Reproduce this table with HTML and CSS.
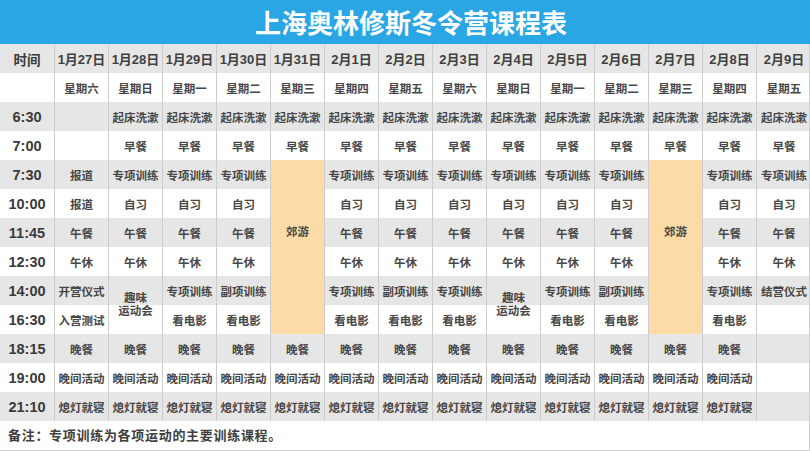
FILE: index.html
```html
<!DOCTYPE html>
<html lang="zh-CN">
<head>
<meta charset="utf-8">
<title>上海奥林修斯冬令营课程表</title>
<link rel="stylesheet" href="styles.css">
</head>
<body>
<div class="page">
  <div class="title">上海奥林修斯冬令营课程表</div>
  <div class="box">
    <div class="grid">
      <!-- dates -->
      <div class="c t hd">时间</div>
      <div class="c d">1月27日</div><div class="c d">1月28日</div><div class="c d">1月29日</div><div class="c d">1月30日</div><div class="c d">1月31日</div><div class="c d">2月1日</div><div class="c d">2月2日</div><div class="c d">2月3日</div><div class="c d">2月4日</div><div class="c d">2月5日</div><div class="c d">2月6日</div><div class="c d">2月7日</div><div class="c d">2月8日</div><div class="c d">2月9日</div>
      <!-- weekdays -->
      <div class="c t"></div>
      <div class="c w">星期六</div><div class="c w">星期日</div><div class="c w">星期一</div><div class="c w">星期二</div><div class="c w">星期三</div><div class="c w">星期四</div><div class="c w">星期五</div><div class="c w">星期六</div><div class="c w">星期日</div><div class="c w">星期一</div><div class="c w">星期二</div><div class="c w">星期三</div><div class="c w">星期四</div><div class="c w">星期五</div>
      <!-- 6:30 -->
      <div class="c t">6:30</div>
      <div class="c"></div><div class="c">起床洗漱</div><div class="c">起床洗漱</div><div class="c">起床洗漱</div><div class="c">起床洗漱</div><div class="c">起床洗漱</div><div class="c">起床洗漱</div><div class="c">起床洗漱</div><div class="c">起床洗漱</div><div class="c">起床洗漱</div><div class="c">起床洗漱</div><div class="c">起床洗漱</div><div class="c">起床洗漱</div><div class="c">起床洗漱</div>
      <!-- 7:00 -->
      <div class="c t">7:00</div>
      <div class="c"></div><div class="c">早餐</div><div class="c">早餐</div><div class="c">早餐</div><div class="c">早餐</div><div class="c">早餐</div><div class="c">早餐</div><div class="c">早餐</div><div class="c">早餐</div><div class="c">早餐</div><div class="c">早餐</div><div class="c">早餐</div><div class="c">早餐</div><div class="c">早餐</div>
      <!-- 7:30 -->
      <div class="c t">7:30</div>
      <div class="c">报道</div><div class="c">专项训练</div><div class="c">专项训练</div><div class="c">专项训练</div>
      <div class="c trip">郊游</div>
      <div class="c">专项训练</div><div class="c">专项训练</div><div class="c">专项训练</div><div class="c">专项训练</div><div class="c">专项训练</div><div class="c">专项训练</div>
      <div class="c trip">郊游</div>
      <div class="c">专项训练</div><div class="c">专项训练</div>
      <!-- 10:00 -->
      <div class="c t">10:00</div>
      <div class="c">报道</div><div class="c">自习</div><div class="c">自习</div><div class="c">自习</div>
      <div class="c">自习</div><div class="c">自习</div><div class="c">自习</div><div class="c">自习</div><div class="c">自习</div><div class="c">自习</div>
      <div class="c">自习</div><div class="c">自习</div>
      <!-- 11:45 -->
      <div class="c t">11:45</div>
      <div class="c">午餐</div><div class="c">午餐</div><div class="c">午餐</div><div class="c">午餐</div>
      <div class="c">午餐</div><div class="c">午餐</div><div class="c">午餐</div><div class="c">午餐</div><div class="c">午餐</div><div class="c">午餐</div>
      <div class="c">午餐</div><div class="c">午餐</div>
      <!-- 12:30 -->
      <div class="c t">12:30</div>
      <div class="c">午休</div><div class="c">午休</div><div class="c">午休</div><div class="c">午休</div>
      <div class="c">午休</div><div class="c">午休</div><div class="c">午休</div><div class="c">午休</div><div class="c">午休</div><div class="c">午休</div>
      <div class="c">午休</div><div class="c">午休</div>
      <!-- 14:00 -->
      <div class="c t">14:00</div>
      <div class="c">开营仪式</div>
      <div class="c fun">趣味<br>运动会</div>
      <div class="c">专项训练</div><div class="c">副项训练</div>
      <div class="c">专项训练</div><div class="c">副项训练</div><div class="c">专项训练</div>
      <div class="c fun">趣味<br>运动会</div>
      <div class="c">专项训练</div><div class="c">副项训练</div>
      <div class="c">专项训练</div><div class="c">结营仪式</div>
      <!-- 16:30 -->
      <div class="c t">16:30</div>
      <div class="c">入营测试</div>
      <div class="c">看电影</div><div class="c">看电影</div>
      <div class="c">看电影</div><div class="c">看电影</div><div class="c">看电影</div>
      <div class="c">看电影</div><div class="c">看电影</div>
      <div class="c">看电影</div><div class="c"></div>
      <!-- 18:15 -->
      <div class="c t">18:15</div>
      <div class="c">晚餐</div><div class="c">晚餐</div><div class="c">晚餐</div><div class="c">晚餐</div><div class="c">晚餐</div><div class="c">晚餐</div><div class="c">晚餐</div><div class="c">晚餐</div><div class="c">晚餐</div><div class="c">晚餐</div><div class="c">晚餐</div><div class="c">晚餐</div><div class="c">晚餐</div><div class="c"></div>
      <!-- 19:00 -->
      <div class="c t">19:00</div>
      <div class="c">晚间活动</div><div class="c">晚间活动</div><div class="c">晚间活动</div><div class="c">晚间活动</div><div class="c">晚间活动</div><div class="c">晚间活动</div><div class="c">晚间活动</div><div class="c">晚间活动</div><div class="c">晚间活动</div><div class="c">晚间活动</div><div class="c">晚间活动</div><div class="c">晚间活动</div><div class="c">晚间活动</div><div class="c"></div>
      <!-- 21:10 -->
      <div class="c t">21:10</div>
      <div class="c">熄灯就寝</div><div class="c">熄灯就寝</div><div class="c">熄灯就寝</div><div class="c">熄灯就寝</div><div class="c">熄灯就寝</div><div class="c">熄灯就寝</div><div class="c">熄灯就寝</div><div class="c">熄灯就寝</div><div class="c">熄灯就寝</div><div class="c">熄灯就寝</div><div class="c">熄灯就寝</div><div class="c">熄灯就寝</div><div class="c">熄灯就寝</div><div class="c"></div>
    </div>
    <div class="note">备注：专项训练为各项运动的主要训练课程。</div>
  </div>
</div>
</body>
</html>
```
FILE: styles.css
```css
* { box-sizing: border-box; }
html, body { margin: 0; padding: 0; background: #ffffff; }
body {
  font-family: "Liberation Sans", "Noto Sans CJK SC", sans-serif;
  font-weight: bold;
  color: #4a4a4a;
}
.page { width: 810px; }
.title {
  height: 44px;
  background: #2aa6e5;
  color: #ffffff;
  font-family: "Noto Sans CJK SC", sans-serif;
  font-size: 26px;
  font-weight: bold;
  line-height: 44px;
  text-align: center;
  padding-left: 12px;
}
.box {
  width: 810px;
  border-right: 1px solid #cccccc;
  border-bottom: 1px solid #cccccc;
}
.grid {
  display: grid;
  grid-template-columns: repeat(14, 54px) 55px;
  grid-auto-rows: 29px;
  background: repeating-linear-gradient(to bottom, #e6e6e6 0, #e6e6e6 29px, #ffffff 29px, #ffffff 58px);
}
.c {
  border-left: 1px solid #cccccc;
  display: flex;
  align-items: center;
  justify-content: center;
  font-size: 11.5px;
  white-space: nowrap;
  color: #474747;
}
.c.t {
  border-left: none;
  font-size: 14.5px;
  color: #3a3a3a;
}
.c.t.hd { font-size: 13.5px; }
.c.d { font-size: 13px; color: #404040; }
.c.w { font-size: 11.5px; }
.trip {
  grid-row: span 6;
  background: #fddba6;
  align-items: flex-start;
  padding-top: 58px;
  line-height: 29px;
}
.fun {
  grid-row: span 2;
  text-align: center;
  line-height: 13px;
}
.note {
  height: 29px;
  line-height: 29px;
  padding-left: 8px;
  font-size: 13px;
  letter-spacing: 0.7px;
  color: #404040;
}
```
